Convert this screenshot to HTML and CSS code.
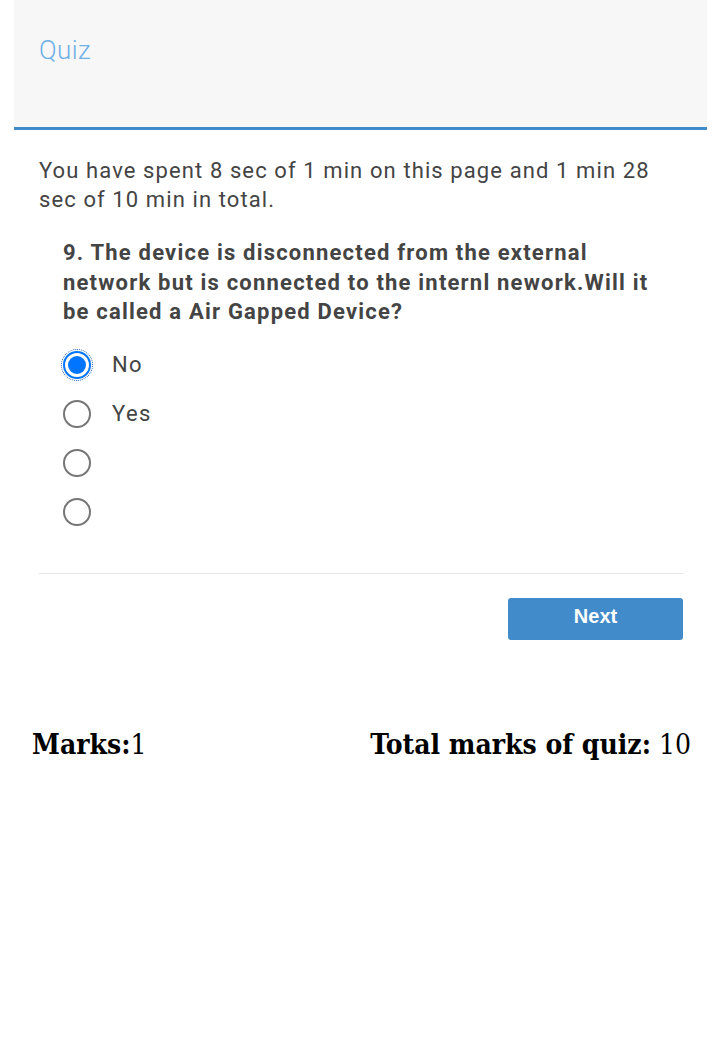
FILE: index.html
```html
<!DOCTYPE html>
<html>
<head>
<meta charset="utf-8">
<link rel="stylesheet" href="styles.css">
</head>
<body>
<div class="page">
  <div class="header"><span class="title">Quiz</span></div>
  <div class="content">
    <p class="timer">You have spent 8 sec of 1 min on this page and 1 min 28 sec of 10 min in total.</p>
    <div class="question">
      <p class="qtext">9. The device is disconnected from the external network but is connected to the internl nework.Will it be called a Air Gapped Device?</p>
      <div class="options">
        <label class="opt"><span class="radio checked"><span class="dot"></span></span><span class="lbl">No</span></label>
        <label class="opt"><span class="radio"></span><span class="lbl">Yes</span></label>
        <label class="opt"><span class="radio"></span><span class="lbl"></span></label>
        <label class="opt"><span class="radio"></span><span class="lbl"></span></label>
      </div>
    </div>
    <hr class="divider">
    <div class="actions"><button class="next">Next</button></div>
  </div>
  <div class="marks">
    <div><b>Marks:</b>1</div>
    <div><b>Total marks of quiz:</b> 10</div>
  </div>
</div>
</body>
</html>
```

FILE: styles.css
```css
html, body { margin: 0; padding: 0; background: #fff; }
body { font-family: Roboto, "Liberation Sans", sans-serif; color: #444; }
.page { padding: 0 12px 0 14px; }
.header {
  background: #f7f7f7;
  border-bottom: 3px solid #428bca;
  padding: 35px 25px 0;
  box-sizing: border-box;
  height: 130px;
}
.title { font-weight: 300; font-size: 26px; color: #6fb0e6; letter-spacing: 0.4px; }
.content { padding: 26px 24px 0 25px; }
.timer { margin: 0; font-size: 22px; line-height: 29px; letter-spacing: 1.1px; }
.question { padding: 0 24px 0 24px; margin-top: 24px; }
.qtext { margin: 0; font-size: 22px; font-weight: 700; line-height: 29.5px; letter-spacing: 1.2px; }
.options { margin-top: 24px; display: flex; flex-direction: column; gap: 21px; }
.opt { display: flex; align-items: center; gap: 21px; height: 28px; font-size: 22px; letter-spacing: 1.4px; }
.radio {
  width: 28px; height: 28px; box-sizing: border-box;
  border: 2px solid #767676; border-radius: 50%;
  display: flex; align-items: center; justify-content: center;
  flex: none;
}
.radio.checked { border-color: #0075ff; outline: 1px dotted #1a5fb4; outline-offset: 1px; }
.radio .dot { width: 18px; height: 18px; border-radius: 50%; background: #0075ff; }
.divider { border: 0; border-top: 1px solid #e5e5e5; margin: 47px 0 0; }
.actions { display: flex; justify-content: flex-end; margin-top: 24px; }
.next {
  width: 175px; height: 42px; background: #428bca; color: #fff; border: 0;
  border-radius: 3px; font-family: "Liberation Sans", Arial, sans-serif;
  font-weight: 700; font-size: 20px; padding: 0 0 4px;
}
.marks {
  display: flex; justify-content: space-between;
  margin-top: 88px; padding: 0 16px 0 18px;
  font-family: "DejaVu Serif", serif; font-stretch: condensed; font-size: 28px; color: #000;
}
```
